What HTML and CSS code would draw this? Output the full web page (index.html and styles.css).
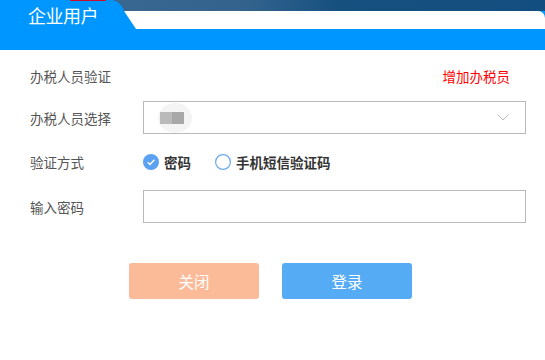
FILE: index.html
```html
<!DOCTYPE html>
<html lang="zh-CN">
<head>
  <meta charset="UTF-8">
  <meta name="viewport" content="width=device-width, initial-scale=1.0">
  <title>企业用户</title>
  <link rel="stylesheet" href="styles.css">
</head>
<body>
  <div class="dialog">
    <header class="dialog-header">
      <div class="header-top">
        <div class="tab">企业用户</div>
        <div class="tab-rest">
          <div class="white-bar"></div>
        </div>
      </div>
      <div class="header-bottom"></div>
    </header>

    <form class="login-form">
      <div class="form-row row-title">
        <span class="row-label">办税人员验证</span>
        <a class="add-link">增加办税员</a>
      </div>

      <div class="form-row row-field">
        <label class="row-label">办税人员选择</label>
        <div class="select-box">
          <span class="masked-name">
            <span class="mask mask-light"></span>
            <span class="mask mask-dark"></span>
          </span>
          <svg class="chevron" width="12" height="7" viewBox="0 0 12 7">
            <polyline points="0.5,0.5 6,6 11.5,0.5" fill="none" stroke="#bdbdbd" stroke-width="1"/>
          </svg>
        </div>
      </div>

      <div class="form-row row-radio">
        <span class="row-label">验证方式</span>
        <div class="radio-group">
          <label class="radio-option">
            <span class="radio-mark checked">
              <svg width="16" height="16" viewBox="0 0 16 16">
                <circle cx="8" cy="8" r="8" fill="#5ba2f2"/>
                <polyline points="4.6,8.2 7,10.5 11.4,5.8" fill="none" stroke="#fff" stroke-width="1.4"/>
              </svg>
            </span>
            <span class="radio-text">密码</span>
          </label>
          <label class="radio-option">
            <span class="radio-mark">
              <svg width="16" height="16" viewBox="0 0 16 16">
                <circle cx="8" cy="8" r="7.4" fill="#fff" stroke="#6aa8f0" stroke-width="1.2"/>
              </svg>
            </span>
            <span class="radio-text">手机短信验证码</span>
          </label>
        </div>
      </div>

      <div class="form-row row-field">
        <label class="row-label">输入密码</label>
        <div class="text-box"></div>
      </div>

      <div class="button-row">
        <button type="button" class="btn btn-close">关闭</button>
        <button type="button" class="btn btn-login">登录</button>
      </div>
    </form>
  </div>
</body>
</html>
```

FILE: styles.css
```css
:root {
  --brand-blue: #0096ff;
  --navy: #134e80;
  --label-color: #555555;
  --border-color: #b9b9b9;
}

* {
  margin: 0;
  padding: 0;
  box-sizing: border-box;
}

body {
  font-family: "Noto Sans CJK SC", "Noto Sans", sans-serif;
  background: #ffffff;
  width: 545px;
  height: 360px;
  overflow: hidden;
}

/* Header */
.dialog-header {
  height: 50px;
  background: var(--brand-blue);
}

.header-top {
  display: flex;
  height: 29px;
  background: linear-gradient(100deg, #3d6b93 0, #33638d 45%, #15507f 62%, var(--navy) 100%);
}

.tab {
  width: 124px;
  padding-left: 28px;
  padding-top: 3px;
  background: var(--brand-blue);
  border-top-right-radius: 14px;
  color: #ffffff;
  font-size: 18px;
  line-height: 24px;
  letter-spacing: -0.5px;
  position: relative;
}

.tab::before {
  content: '';
  position: absolute;
  top: 0;
  left: 70px;
  width: 36px;
  height: 1px;
  background: #c8102e;
}

.tab-rest {
  flex: 1;
  padding-top: 11px;
  background: linear-gradient(var(--brand-blue), var(--brand-blue)) bottom / 100% 18px no-repeat;
}

.white-bar {
  height: 18px;
  background: #ffffff;
  border-top-right-radius: 7px;
  clip-path: polygon(0 0, 100% 0, 100% 100%, 12px 100%);
}

.header-bottom {
  height: 21px;
}

/* Form */
.login-form {
  display: flex;
  flex-direction: column;
  padding: 12px 19px 0 30px;
}

.form-row {
  display: flex;
  align-items: center;
}

.row-label {
  width: 113px;
  flex-shrink: 0;
  font-size: 13.5px;
  color: var(--label-color);
}

.row-title {
  height: 28px;
  justify-content: space-between;
  padding-right: 16px;
}

.add-link {
  font-size: 13.5px;
  color: #ff0000;
  cursor: pointer;
}

.row-field {
  height: 33px;
  margin-top: 11px;
}

.select-box,
.text-box {
  flex: 1;
  height: 33px;
  border: 1px solid var(--border-color);
  background: #ffffff;
}

.select-box {
  display: flex;
  align-items: center;
  justify-content: space-between;
  padding: 0 16px 0 14px;
}

.masked-name {
  display: flex;
  align-items: center;
  padding: 9px 8px 9px 2px;
  background: #f4f4f4;
  border-radius: 50%;
}

.mask {
  width: 12px;
  height: 12px;
}

.mask-light {
  background: #bababa;
}

.mask-dark {
  background: #a8a8a8;
}

.chevron {
  display: block;
}

.row-radio {
  height: 34px;
  margin-top: 11px;
}

.radio-group {
  display: flex;
  align-items: center;
  gap: 24px;
}

.radio-option {
  display: flex;
  align-items: center;
  gap: 5px;
  cursor: pointer;
}

.radio-mark svg {
  display: block;
}

.radio-text {
  font-size: 13.5px;
  font-weight: 600;
  color: #333333;
}

/* Buttons */
.button-row {
  display: flex;
  justify-content: center;
  gap: 23px;
  margin-top: 40px;
  padding-right: 15px;
}

.btn {
  width: 130px;
  height: 36px;
  border: none;
  border-radius: 3px;
  color: #ffffff;
  font-family: inherit;
  font-size: 15.5px;
  cursor: pointer;
}

.btn-close {
  background: #fbbb98;
}

.btn-login {
  background: #55abf4;
}
```
